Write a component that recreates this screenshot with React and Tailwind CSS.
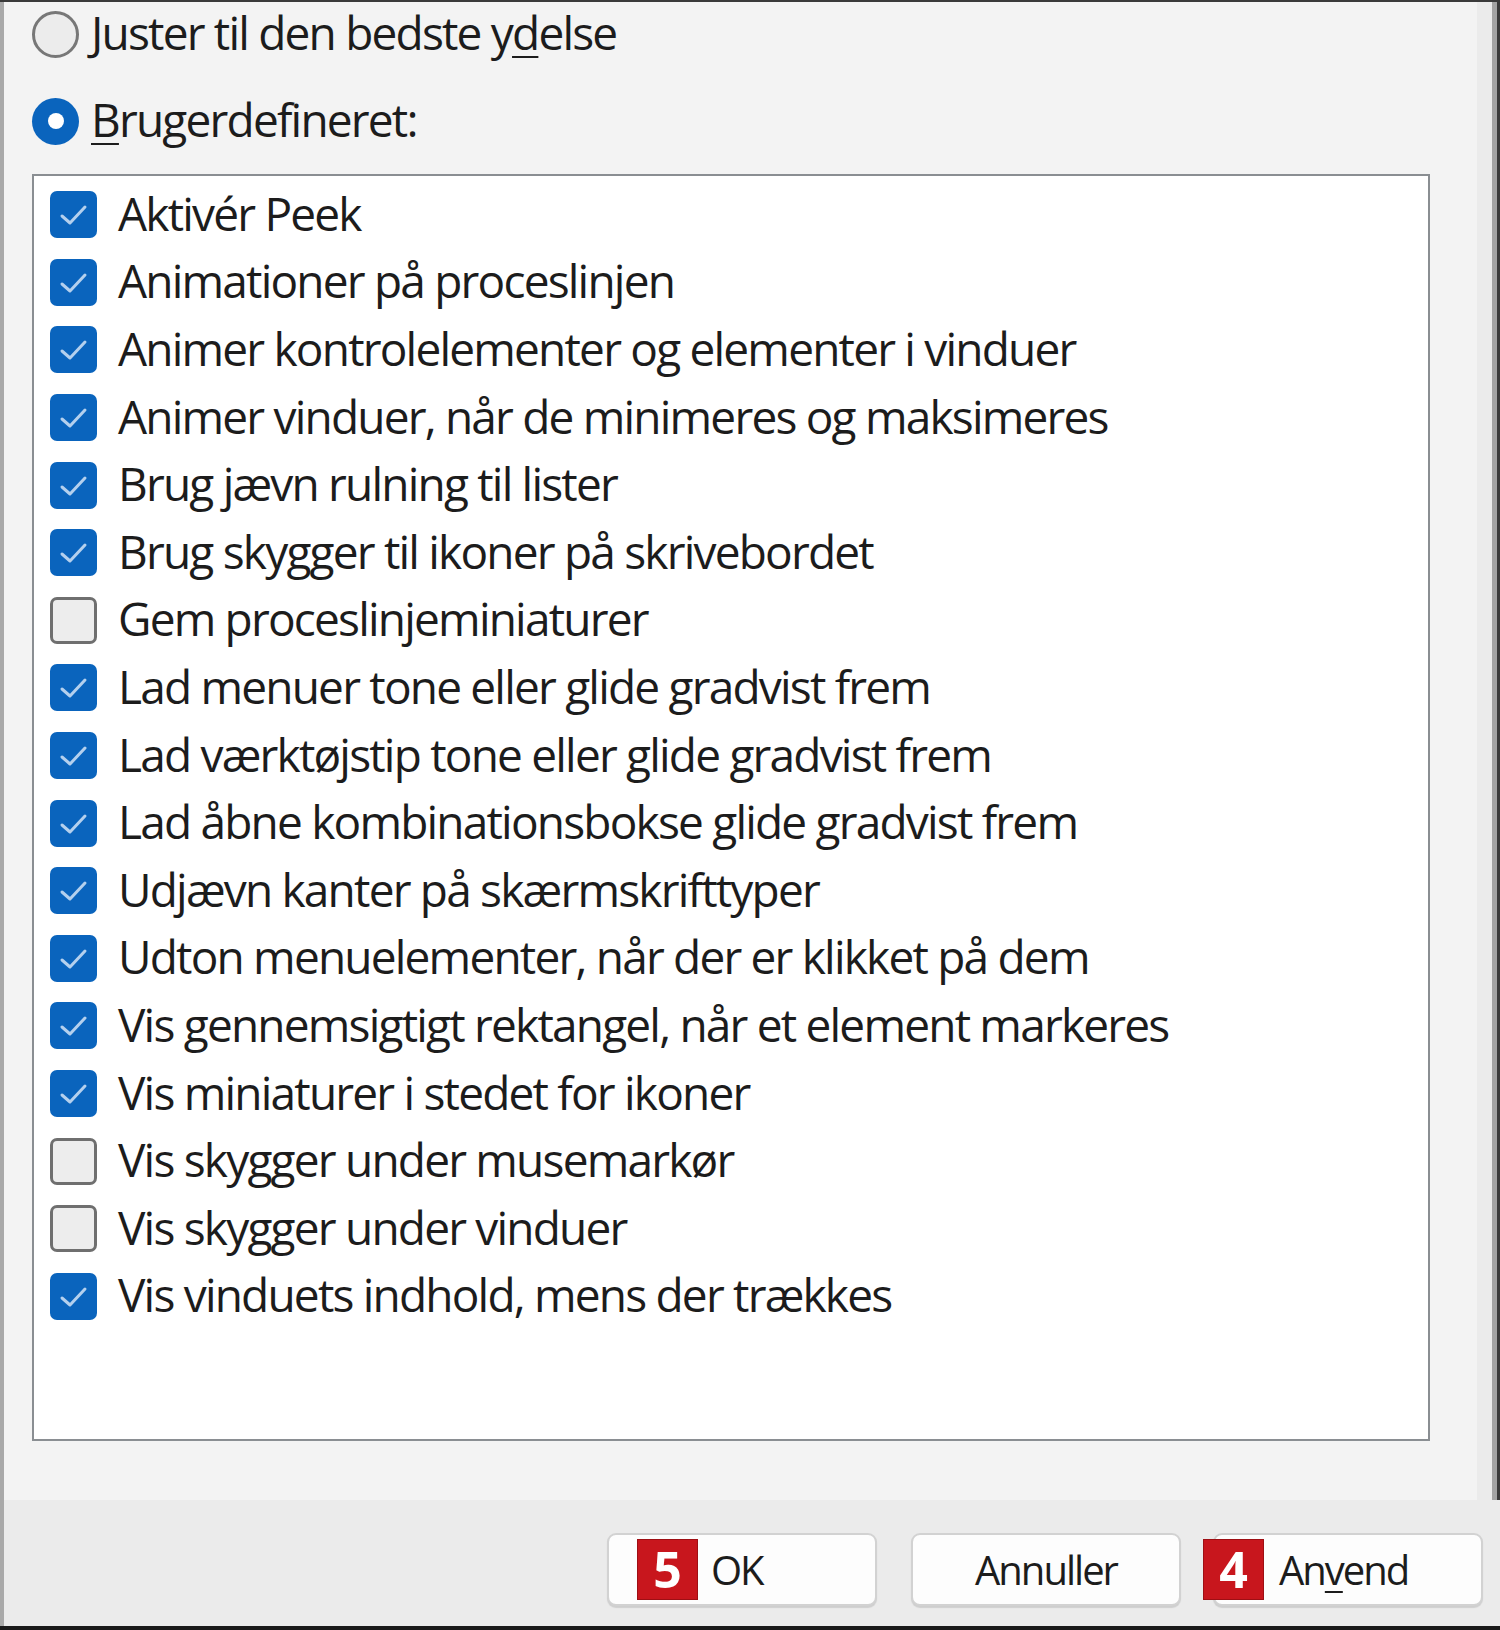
import React from "react";

const items = [
  ["Aktivér Peek", true],
  ["Animationer på proceslinjen", true],
  ["Animer kontrolelementer og elementer i vinduer", true],
  ["Animer vinduer, når de minimeres og maksimeres", true],
  ["Brug jævn rulning til lister", true],
  ["Brug skygger til ikoner på skrivebordet", true],
  ["Gem proceslinjeminiaturer", false],
  ["Lad menuer tone eller glide gradvist frem", true],
  ["Lad værktøjstip tone eller glide gradvist frem", true],
  ["Lad åbne kombinationsbokse glide gradvist frem", true],
  ["Udjævn kanter på skærmskrifttyper", true],
  ["Udton menuelementer, når der er klikket på dem", true],
  ["Vis gennemsigtigt rektangel, når et element markeres", true],
  ["Vis miniaturer i stedet for ikoner", true],
  ["Vis skygger under musemarkør", false],
  ["Vis skygger under vinduer", false],
  ["Vis vinduets indhold, mens der trækkes", true],
];

function Check({ on }) {
  if (on) {
    return (
      <div className="w-[47px] h-[47px] rounded-[7px] bg-[#0a64bd] shrink-0 flex items-center justify-center">
        <svg width="47" height="47" viewBox="0 0 47 47">
          <path d="M12 25 L20 32 L35 16" fill="none" stroke="#b4d0ee" strokeWidth="3" strokeLinecap="round" strokeLinejoin="round" />
        </svg>
      </div>
    );
  }
  return <div className="w-[47px] h-[47px] rounded-[7px] bg-[#ededed] border-[3px] border-[#6f6f6f] shrink-0" />;
}

export default function App() {
  const font = { fontFamily: '"Open Sans", "Noto Sans", sans-serif' };
  return (
    <div className="w-[1500px] h-[1630px] bg-[#ebebeb] flex flex-col border-t-2 border-[#3a3a3a] border-b-4 border-b-[#1a1a1a]" style={font}>
      <div className="flex flex-1">
        <div className="w-[4px] bg-[#a9a9a9]" />
        <div className="flex flex-col flex-1">
          <div className="flex">
            <div className="w-[1473px] h-[1498px] bg-[#f3f3f3] flex flex-col pl-[28px]">
              <div className="flex items-center h-[64px]">
                <div className="w-[47px] h-[47px] rounded-full border-[3px] border-[#777] bg-[#ececec] shrink-0" />
                <span className="ml-[12px] text-[46px] font-medium leading-none text-[#1c1c1c] tracking-[-1.8px] pb-[4px]">
                  Juster til den bedste y<span className="underline decoration-2 underline-offset-[6px]">d</span>else
                </span>
              </div>
              <div className="flex items-center h-[48px] mt-[31px]">
                <div className="w-[47px] h-[47px] rounded-full bg-[#0a64bd] shrink-0 flex items-center justify-center">
                  <div className="w-[16px] h-[16px] rounded-full bg-white" />
                </div>
                <span className="ml-[12px] text-[46px] font-medium leading-none text-[#1c1c1c] tracking-[-1.8px] pb-[4px]">
                  <span className="underline decoration-2 underline-offset-[6px]">B</span>rugerdefineret:
                </span>
              </div>
              <div className="mt-[29px] w-[1398px] h-[1267px] bg-white border-2 border-[#8a8e92] pt-[5px] pl-[16px] flex flex-col">
                {items.map(([label, on]) => (
                  <div key={label} className="flex items-center h-[67.6px]">
                    <Check on={on} />
                    <span className="ml-[21px] text-[46px] font-medium leading-none text-[#1c1c1c] tracking-[-1.8px] whitespace-nowrap pb-[4px]">{label}</span>
                  </div>
                ))}
              </div>
            </div>
            <div className="w-[15px]" />
            <div className="w-[5px] bg-[#a3a3a3]" />
            <div className="w-[3px] bg-[#3a3a3a]" />
          </div>
          <div className="relative flex-1 flex">
            <div className="flex items-start pt-[33px] pl-[603px] gap-[34px]">
              <button className="w-[270px] h-[73px] rounded-[9px] bg-[#fdfdfd] border-2 border-[#d2d2d2] shadow-[0_2px_1px_rgba(0,0,0,0.12)] flex items-center pl-[102px] text-[40px] font-medium text-[#1c1c1c] tracking-[-2px]">
                OK
              </button>
              <button className="w-[270px] h-[73px] rounded-[9px] bg-[#fdfdfd] border-2 border-[#d2d2d2] shadow-[0_2px_1px_rgba(0,0,0,0.12)] flex items-center justify-center text-[40px] font-medium text-[#1c1c1c] tracking-[-2px]">
                Annuller
              </button>
              <button className="w-[270px] h-[73px] rounded-[9px] bg-[#fdfdfd] border-2 border-[#d2d2d2] shadow-[0_2px_1px_rgba(0,0,0,0.12)] flex items-center pl-[64px] text-[40px] font-medium text-[#1c1c1c] tracking-[-2px] -ml-[2px]">
                An<span className="underline decoration-2 underline-offset-[6px]">v</span>end
              </button>
            </div>
            <div className="absolute left-[633px] top-[39px] w-[61px] h-[61px] bg-[#c8161d] border border-[#9e0f14] flex items-center justify-center text-white font-bold text-[50px] leading-none pb-[2px]">5</div>
            <div className="absolute left-[1199px] top-[39px] w-[61px] h-[61px] bg-[#c8161d] border border-[#9e0f14] flex items-center justify-center text-white font-bold text-[50px] leading-none pb-[2px]">4</div>
          </div>
        </div>
      </div>
    </div>
  );
}
